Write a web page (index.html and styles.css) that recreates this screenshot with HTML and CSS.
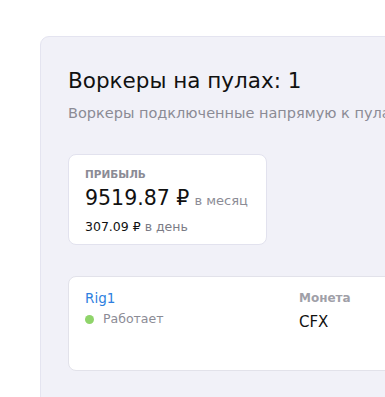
FILE: index.html
```html
<!DOCTYPE html>
<html lang="ru">
<head>
<meta charset="utf-8">
<link rel="stylesheet" href="styles.css">
</head>
<body>
<div class="panel">
  <h1 class="title">Воркеры на пулах: 1</h1>
  <p class="subtitle">Воркеры подключенные напрямую к пулам</p>
  <div class="profit">
    <div class="profit-label">ПРИБЫЛЬ</div>
    <div class="profit-main"><span class="big">9519.87 ₽</span> <span class="unit">в месяц</span></div>
    <div class="profit-day">307.09 ₽ <span class="unit-day">в день</span></div>
  </div>
  <div class="rig">
    <div class="rig-col">
      <a class="rig-name">Rig1</a>
      <div class="status"><span class="dot"></span><span class="status-text">Работает</span></div>
    </div>
    <div class="coin-col">
      <div class="coin-label">Монета</div>
      <div class="coin">CFX</div>
    </div>
  </div>
</div>
</body>
</html>
```
FILE: styles.css
```css
html, body {
  margin: 0;
  background: #ffffff;
  overflow: hidden;
}
body {
  width: 385px;
  height: 397px;
  padding: 36px 0 0 40px;
  box-sizing: border-box;
  font-family: "DejaVu Sans", "Noto Sans", sans-serif;
  color: #111;
}
.panel {
  width: 420px;
  height: 400px;
  box-sizing: border-box;
  background: #f1f1f8;
  border: 1px solid #e4e4f0;
  border-radius: 9px 0 0 0;
  padding: 30px 0 0 27px;
}
.title {
  margin: 0;
  font-size: 21.5px;
  font-weight: 400;
  line-height: 28px;
  white-space: nowrap;
}
.subtitle {
  margin: 9px 0 0;
  font-size: 14.5px;
  line-height: 19px;
  color: #8b8b95;
  white-space: nowrap;
}
.profit {
  margin-top: 31px;
  width: 199px;
  height: 91px;
  box-sizing: border-box;
  background: #fff;
  border: 1px solid #e2e2ee;
  border-radius: 8px;
  padding: 11px 0 0 16px;
}
.profit-label {
  font-size: 10.5px;
  font-weight: 700;
  color: #8b8b95;
  line-height: 16px;
}
.profit-main {
  white-space: nowrap;
  line-height: 30px;
  margin-top: 1px;
}
.big {
  font-size: 20.5px;
}
.unit {
  font-size: 13px;
  color: #8b8b95;
}
.profit-day {
  font-size: 12.5px;
  line-height: 20px;
  margin-top: 1px;
  white-space: nowrap;
}
.unit-day {
  color: #7b7b85;
}
.rig {
  margin-top: 31px;
  height: 95px;
  box-sizing: border-box;
  background: #fff;
  border: 1px solid #e2e2ea;
  border-radius: 8px 0 0 8px;
  display: flex;
  padding: 12px 0 0 16px;
}
.rig-col {
  width: 214px;
}
.rig-name {
  display: block;
  font-size: 13.5px;
  color: #2e7fe0;
  line-height: 18px;
}
.status {
  display: flex;
  align-items: center;
  gap: 9px;
  margin-top: 3px;
}
.dot {
  width: 9px;
  height: 9px;
  border-radius: 50%;
  background: #8fd46a;
}
.status-text {
  font-size: 12.5px;
  color: #8b8b95;
  line-height: 18px;
}
.coin-label {
  font-size: 12px;
  font-weight: 700;
  color: #a0a0a8;
  line-height: 18px;
}
.coin {
  margin-top: 6px;
  font-size: 15px;
  line-height: 18px;
}
```
